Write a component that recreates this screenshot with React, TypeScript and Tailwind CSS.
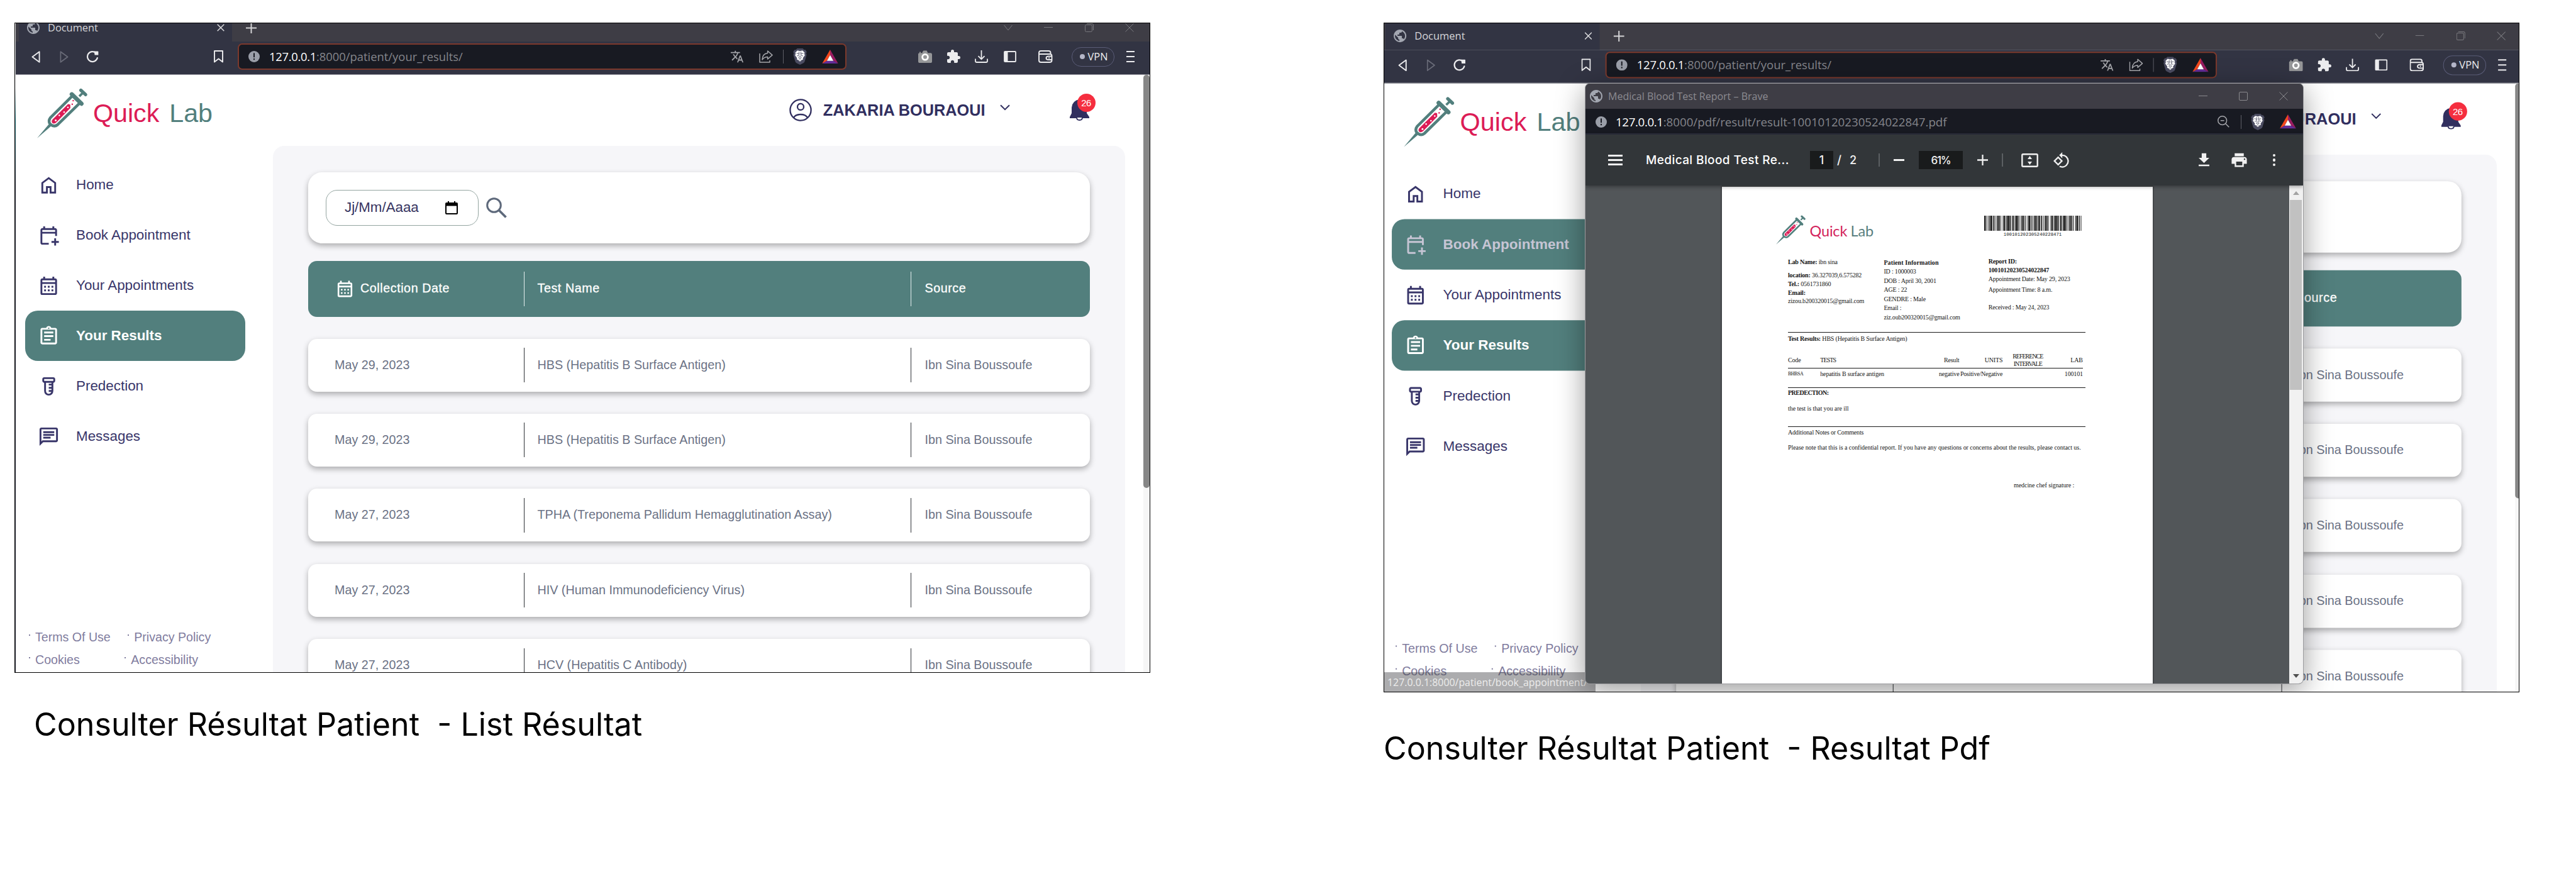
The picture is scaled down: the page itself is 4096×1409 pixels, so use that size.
import type { ReactNode } from "react";
import {
  MdExtension,
  MdFileDownload,
  MdOutlineAssignment,
  MdOutlineCalendarMonth,
  MdOutlineChat,
  MdPrint,
  MdPublic,
  MdRotate90DegreesCcw,
  MdTranslate,
} from "react-icons/md";

/* ---------- drawings ---------- */

function Syringe({ className }: { className: string }) {
  return (
    <svg viewBox="58 50 322 322" className={className} fill="none">
      <path d="M58 371 134 280 148 294Z" fill="#527f7d" />
      <path
        d="M281 103 144 239Q126 262 142 281Q166 303 189 285L330 147"
        stroke="#527f7d"
        strokeWidth="18"
      />
      <path d="M280 90 342 150" stroke="#527f7d" strokeWidth="27" strokeLinecap="round" />
      <path d="M328 103 352 80" stroke="#527f7d" strokeWidth="15" />
      <path d="M338 64 368 92" stroke="#527f7d" strokeWidth="21" strokeLinecap="round" />
      <path
        d="M157 251 256 153 270 156 271 178 182 269Q166 284 154 272Q148 261 157 251Z"
        fill="#dc1c56"
      />
      <g fill="#fff">
        <circle cx="177" cy="257" r="6" />
        <circle cx="200" cy="225" r="5" />
        <circle cx="231" cy="204" r="5" />
        <circle cx="255" cy="174" r="5" />
      </g>
      <circle cx="289" cy="131" r="5" fill="#dc1c56" />
      <circle cx="283" cy="154" r="5" fill="#dc1c56" />
    </svg>
  );
}

function Globe() {
  return <MdPublic className="-m-[2px] size-[24px] shrink-0 text-[#a3a7b1]" />;
}

function InfoDot() {
  return (
    <svg viewBox="0 0 18 18" className="size-[18px] shrink-0">
      <circle cx="9" cy="9" r="9" fill="#9a9ea8" />
      <rect x="8" y="3.4" width="2" height="6.8" fill="#181a22" />
      <rect x="8" y="12" width="2" height="2.2" fill="#181a22" />
    </svg>
  );
}

function BraveShield() {
  return (
    <svg viewBox="0 0 88 104" className="h-[26px] w-[22px] shrink-0">
      <path
        d="M26 0h36l8 9h8l9 13-4 9 3 10-12 42q-2 6-8 10L44 104 22 93q-6-4-8-10L2 41l3-10-4-9L10 9h8Z"
        fill="#4b4c61"
      />
      <path
        d="M28 13 44 17 60 13 74 27 71 33 75 44 62 62 64 70 54 74 44 82 34 74 24 70 26 62 13 44 17 33 14 27Z"
        fill="#fff"
      />
      <path
        d="M22 31 38 34M66 31 50 34M37 21 39 32 36 44 41 54 35 60 44 66 53 60 47 54 52 44 49 32 51 21M24 48 33 46M64 48 55 46"
        fill="none"
        stroke="#4b4c61"
        strokeWidth="3.6"
      />
      <path d="M44 71 54 77 44 84 34 77Z" fill="#fff" stroke="#4b4c61" strokeWidth="2" />
    </svg>
  );
}

function BatTriangle() {
  return (
    <svg viewBox="0 0 104 90" className="h-[22.3px] w-[26px] shrink-0">
      <path d="M52 0V34L31 72 0 90Z" fill="#f4481e" />
      <path d="M52 0 104 90 73 72 52 34Z" fill="#991c62" />
      <path d="M0 90 31 72H73L104 90Z" fill="#632d98" />
      <path d="M52 34 73 72H31Z" fill="#fff" />
    </svg>
  );
}

function Minimize() {
  return (
    <svg viewBox="0 0 14 14" className="size-[14px]" stroke="currentColor" fill="none">
      <path d="M0 6.5H14" />
    </svg>
  );
}

function CloseX({ className = "size-[14px]" }: { className?: string }) {
  return (
    <svg viewBox="0 0 14 14" className={className} stroke="currentColor" fill="none">
      <path d="M.5.5 13.5 13.5M13.5.5.5 13.5" />
    </svg>
  );
}

/* ---------- browser chrome ---------- */

function TabStrip() {
  return (
    <div className="flex h-[42.5px] shrink-0 items-stretch bg-[#3e3d45]">
      <div className="ml-[5px] flex w-[339px] shrink-0 items-center bg-[#323443] pl-[13px] pr-[12px]">
        <Globe />
        <span className="ml-[13px] font-['Open_Sans'] text-[16.4px] leading-5 text-[#d6d6da]">
          Document
        </span>
        <span className="ml-auto text-[#dcdcdf]">
          <svg viewBox="0 0 12 12" className="size-[12px]" stroke="currentColor" strokeWidth="1.5">
            <path d="M.7.7 11.3 11.3M11.3.7.7 11.3" />
          </svg>
        </span>
      </div>
      <div className="flex flex-1 items-center pl-[22px] pr-[25px]">
        <svg viewBox="0 0 17 17" className="size-[17px]" stroke="#d4d4d6" strokeWidth="2">
          <path d="M8.5 0V17M0 8.5H17" />
        </svg>
        <div className="ml-auto flex items-center gap-[50.5px] text-[#77777c]">
          <svg viewBox="0 0 14 14" className="size-[14px]" stroke="currentColor" fill="none">
            <path d="M.5 3 7 11 13.5 3" />
          </svg>
          <Minimize />
          <svg viewBox="0 0 14 14" className="size-[14px]" stroke="currentColor" fill="none">
            <rect x=".5" y="2.5" width="11" height="11" rx="2" />
            <path d="M3 .5H11Q13.5.5 13.5 3V11" />
          </svg>
          <CloseX />
        </div>
      </div>
    </div>
  );
}

function Toolbar() {
  return (
    <div className="flex h-[53px] shrink-0 items-center border-b border-[#85858f] bg-[#323443] pb-[3px] text-[#ececee]">
      <svg viewBox="0 0 14 19" className="ml-[25px] h-[19px] w-[14px] shrink-0" fill="none">
        <path d="M12.6 1.2V17.8L1.4 9.5Z" stroke="#ececee" strokeWidth="1.9" strokeLinejoin="round" />
      </svg>
      <svg viewBox="0 0 14 19" className="ml-[31px] h-[19px] w-[14px] shrink-0" fill="none">
        <path d="M1.4 1.2V17.8L12.6 9.5Z" stroke="#696b78" strokeWidth="1.7" strokeLinejoin="round" />
      </svg>
      <svg viewBox="0 0 20 20" className="ml-[28px] size-[20px] shrink-0" fill="none">
        <path
          d="M15.5 4.2A8 8 0 1 0 17.8 12"
          stroke="#ececee"
          strokeWidth="2.2"
          strokeLinecap="round"
        />
        <path d="M12.6 1.6H18.6Q19.4 1.6 19.4 2.6V7.6H13.6Z" fill="#ececee" />
      </svg>
      <svg viewBox="0 0 15 20" className="ml-[183px] h-[20px] w-[15px] shrink-0" fill="none">
        <path d="M1 1H14V18.6L7.5 13.4 1 18.6Z" stroke="#ececee" strokeWidth="1.9" strokeLinejoin="round" />
      </svg>

      <div className="ml-[23px] flex h-[42px] w-[968px] shrink-0 items-center rounded-[7px] border-2 border-[#7c392c] bg-[#181a22] pl-[15px] pr-[11px]">
        <InfoDot />
        <span className="ml-[15px] whitespace-nowrap font-['Open_Sans'] text-[18.4px] leading-6 text-[#84858b]">
          <span className="tracking-[-0.3px] text-white">127.0.0.1</span>
          :8000/patient/your_results/
        </span>
        <div className="ml-auto flex items-center">
          <MdTranslate className="-m-px size-[22px] text-[#a5a6ab]" />
          <svg viewBox="0 0 22 20" className="ml-[25px] h-[20px] w-[22px]" fill="none">
            <path
              d="M1 5V19H17V16M13.6 1 21 7.6 13.6 14V10.6Q8 10.6 5 15Q5.4 5.4 13.6 4.6Z"
              stroke="#a5a6ab"
              strokeWidth="1.5"
              strokeLinejoin="round"
            />
          </svg>
          <span className="ml-[16px] mr-[15px] h-[22px] w-[1.5px] bg-[#5d5e66]" />
          <BraveShield />
          <span className="w-[24px]" />
          <BatTriangle />
        </div>
      </div>

      <svg viewBox="0 0 22 20" className="ml-[114px] h-[20px] w-[22px] shrink-0">
        <path
          d="M7 2.2 8.4.4H13.6L15.4 4.2H19.6Q22 4.2 22 6.6V17.4Q22 20 19.4 20H2.6Q0 20 0 17.4V6Q0 4.2 2 4.2L2 2.6H4V4.2L6.4 4.2Z"
          fill="#969799"
        />
        <circle cx="11" cy="10.8" r="4.4" fill="#969799" stroke="#fff" strokeWidth="2.8" />
      </svg>
      <MdExtension className="-mr-[2px] ml-[22px] size-[24px] shrink-0" />
      <svg viewBox="0 0 21 20" className="ml-[24px] h-[20px] w-[21px] shrink-0" fill="none">
        <path
          d="M10.5 0V14M5.5 9.2 10.5 14.2 15.5 9.2M1 13.5V17Q1 19 3 19H18Q20 19 20 17V13.5"
          stroke="#ececee"
          strokeWidth="1.8"
        />
      </svg>
      <svg viewBox="0 0 20 18" className="ml-[25px] h-[18px] w-[20px] shrink-0" fill="none">
        <rect x="1" y="1" width="18" height="16" rx="1" stroke="#ececee" strokeWidth="1.8" />
        <rect x="1" y="1" width="5.5" height="16" fill="#ececee" />
      </svg>
      <svg viewBox="0 0 23 20" className="ml-[35px] h-[20px] w-[23px] shrink-0" fill="none">
        <path
          d="M19.5 6V4Q19.5 1 16.5 1H4Q1 1 1 4V16Q1 19 4 19H18Q21.5 19 21.5 16V9Q21.5 6 18.5 6H1M21.5 9.5H16Q12.5 9.5 12.5 12.2 12.5 15 16 15H21.5M16.2 12.2H18"
          stroke="#ececee"
          strokeWidth="1.9"
        />
      </svg>
      <div className="ml-[30px] flex h-[31px] w-[68px] shrink-0 items-center rounded-[15px] border-[1.5px] border-[#5a5c77] pl-[12px]">
        <span className="size-[8px] rounded-full bg-[#b4b6c8]" />
        <span className="ml-[4.5px] font-['Open_Sans'] text-[16.4px] leading-5">VPN</span>
      </div>
      <div className="ml-[19px] flex w-[13px] shrink-0 flex-col gap-[6px]">
        <span className="h-[2px] bg-[#ececee]" />
        <span className="h-[2px] bg-[#ececee]" />
        <span className="h-[2px] bg-[#ececee]" />
      </div>
    </div>
  );
}

/* ---------- lab site ---------- */

const navIcon = "size-[35px] shrink-0";

const nav: { label: string; icon: ReactNode }[] = [
  {
    label: "Home",
    icon: (
      <svg viewBox="0 0 24 24" className={navIcon} fill="currentColor">
        <path d="M6 19h3v-6h6v6h3v-9l-6-4.5L6 10v9Zm-2 2V9l8-6 8 6v12h-7v-6h-2v6H4Z" />
      </svg>
    ),
  },
  {
    label: "Book Appointment",
    icon: (
      <svg viewBox="0 0 24 24" className={navIcon} fill="currentColor">
        <path d="M5 22q-.83 0-1.4-.6Q3 20.85 3 20V6q0-.83.6-1.4Q4.2 4 5 4h1V2h2v2h8V2h2v2h1q.83 0 1.4.6Q21 5.2 21 6v6.5h-2V10H5v10h7v2H5ZM5 8h14V6H5v2Zm13 15v-3h-3v-2h3v-3h2v3h3v2h-3v3h-2Z" />
      </svg>
    ),
  },
  { label: "Your Appointments", icon: <MdOutlineCalendarMonth className={navIcon} /> },
  { label: "Your Results", icon: <MdOutlineAssignment className={navIcon} /> },
  {
    label: "Predection",
    icon: (
      <svg viewBox="0 0 24 24" className={navIcon} fill="currentColor">
        <path d="M12 22q-2.08 0-3.54-1.46T7 17V8q-.83 0-1.41-.59T5 6V4q0-.83.59-1.41T7 2h10q.83 0 1.41.59T19 4v2q0 .83-.59 1.41T17 8v9q0 2.08-1.46 3.54T12 22ZM7 6h10V4H7v2Zm5 14q1.03 0 1.81-.6.79-.6 1.06-1.4H12v-2h3v-1.5h-3v-2h3V11h-3V9h3V8H9v9q0 1.25.88 2.13T12 20Z" />
      </svg>
    ),
  },
  { label: "Messages", icon: <MdOutlineChat className={navIcon} /> },
];

const results = [
  ["May 29, 2023", "HBS (Hepatitis B Surface Antigen)"],
  ["May 29, 2023", "HBS (Hepatitis B Surface Antigen)"],
  ["May 27, 2023", "TPHA (Treponema Pallidum Hemagglutination Assay)"],
  ["May 27, 2023", "HIV (Human Immunodeficiency Virus)"],
  ["May 27, 2023", "HCV (Hepatitis C Antibody)"],
];

function SiteHeader() {
  return (
    <header className="flex h-[113px] shrink-0 items-center pl-[34px] pr-[86px]">
      <div className="mt-[9px] flex items-center">
        <Syringe className="size-[80px]" />
        <div className="ml-[9px] whitespace-nowrap text-[41.2px] leading-[50px]">
          <span className="text-[#dc1c56]">Quick</span>
          <span className="ml-[16px] text-[#527f7d]">Lab</span>
        </div>
      </div>
      <div className="ml-auto flex items-center text-[#312f5f]">
        <svg viewBox="0 0 36 36" className="size-[36px]" fill="none" stroke="currentColor" strokeWidth="2.3">
          <circle cx="18" cy="18" r="16.6" />
          <circle cx="18" cy="12.9" r="5" />
          <path d="M7 30Q10 25 18 25T29 30" />
        </svg>
        <span className="ml-[18px] whitespace-nowrap text-[25.3px] font-bold leading-8">
          ZAKARIA BOURAOUI
        </span>
        <svg viewBox="0 0 16 10" className="mb-[8px] ml-[23px] h-[10px] w-[16px]" fill="none" stroke="currentColor" strokeWidth="2">
          <path d="M1 1.2 8 8.2 15 1.2" />
        </svg>
        <div className="relative ml-[95px] h-[34px] w-[31px]">
          <svg viewBox="0 0 31 34" className="h-[34px] w-[31px]">
            <path
              d="M15.5 0Q27 1 27 14V22L31 28V30H0V28L3 22V13Q4 2 15.5 0Z"
              fill="#312f5f"
            />
            <path d="M11 29Q11 33 15.5 33T20 29" fill="#fff" stroke="#312f5f" strokeWidth="1.8" />
          </svg>
          <span className="absolute -top-[9px] left-[12px] flex size-[29px] items-center justify-center rounded-full bg-[#f52e3f] text-[15px] leading-none tracking-[-0.6px] text-white">
            26
          </span>
        </div>
      </div>
    </header>
  );
}

function Dot({ className = "" }: { className?: string }) {
  return <span className={`mb-[5px] mr-[8px] size-[2.5px] bg-[#7f7c9e] ${className}`} />;
}

function Sidebar({ hovered }: { hovered?: string }) {
  return (
    <aside className="flex w-[409px] shrink-0 flex-col pt-[22.5px] text-[#39366a]">
      {nav.map(({ label, icon }) => {
        const active = label === "Your Results";
        const hover = label === hovered;
        const tone = active
          ? "bg-[#527f7d] font-bold text-white"
          : hover
            ? "bg-[#527f7d] font-bold text-[#c6c5d4]"
            : "";
        return (
          <div
            key={label}
            className={`ml-[15px] flex h-[80px] w-[350px] shrink-0 items-center rounded-[20px] pl-[19.5px] text-[22.4px] leading-8 ${tone}`}
          >
            {icon}
            <span className="ml-[26.5px] whitespace-nowrap">{label}</span>
          </div>
        );
      })}
      <div className="mt-[260.5px] pl-[20.5px] text-[19.6px] leading-[36px] text-[#7f7c9e]">
        <div className="flex items-center">
          <Dot />
          Terms Of Use
          <Dot className="ml-[27px]" />
          Privacy Policy
        </div>
        <div className="flex items-center">
          <Dot />
          Cookies
          <Dot className="ml-[71px]" />
          Accessibility
        </div>
      </div>
    </aside>
  );
}

function ResultsPanel() {
  return (
    <main className="w-[1355px] shrink-0 rounded-t-[18px] bg-[#f6f6f9] px-[56px] pt-[42px]">
      <div className="flex h-[113px] items-center rounded-[22px] bg-white pl-[28px] shadow-[0_4px_10px_rgba(0,0,0,0.3)]">
        <div className="flex h-[57px] w-[243px] items-center justify-between rounded-[18px] border border-[#94a5a1] pl-[29px] pr-[32px] text-[22.3px] leading-8 text-[#36345f]">
          Jj/Mm/Aaaa
          <svg viewBox="0 0 20 21" className="h-[21px] w-[20px]">
            <path d="M2 2H4V0H6V2H14V0H16V2H18Q20 2 20 4V19Q20 21 18 21H2Q0 21 0 19V4Q0 2 2 2ZM2 7.5V19H18V7.5Z" fillRule="evenodd" />
          </svg>
        </div>
        <svg viewBox="0 0 33 33" className="ml-[12px] size-[33px]" fill="none" stroke="#5e697b">
          <circle cx="12.5" cy="12.5" r="10.8" strokeWidth="3" />
          <path d="M20 20 31.5 31.5" strokeWidth="3.8" />
        </svg>
      </div>

      <div className="mt-[28px] flex h-[89px] items-center rounded-[14px] bg-[#527f7d] text-[19.7px] tracking-[0.57px] text-white [-webkit-text-stroke:0.3px_white]">
        <div className="flex w-[343px] items-center pl-[43px]">
          <MdOutlineCalendarMonth className="size-[31px] [-webkit-text-stroke:0]" />
          <span className="ml-[9px]">Collection Date</span>
        </div>
        <div className="flex h-[55px] w-[615px] items-center border-l border-[#e4eeee] pl-[20.5px]">
          Test Name
        </div>
        <div className="flex h-[55px] items-center border-l border-[#e4eeee] pl-[21.5px]">
          Source
        </div>
      </div>

      <div className="mt-[35px] flex flex-col gap-[35.4px]">
        {results.map(([date, test], i) => (
          <div
            key={i}
            className="flex h-[84px] items-center rounded-[14px] bg-white text-[19.73px] text-[#6b7285] shadow-[0_4px_10px_rgba(0,0,0,0.3)]"
          >
            <div className="w-[343px] pl-[42px]">{date}</div>
            <div className="flex h-[55px] w-[615px] items-center border-l border-[#2f3236] pl-[20.5px]">
              {test}
            </div>
            <div className="flex h-[55px] items-center border-l border-[#2f3236] pl-[21.5px]">
              Ibn Sina Boussoufe
            </div>
          </div>
        ))}
      </div>
    </main>
  );
}

function Screen({ hovered }: { hovered?: string }) {
  return (
    <div className="flex h-[1062px] w-[1803px] shrink-0 flex-col overflow-hidden bg-white font-['Liberation_Sans']">
      <TabStrip />
      <Toolbar />
      <div className="flex min-h-0 flex-1 overflow-hidden">
        <div className="flex flex-1 flex-col">
          <SiteHeader />
          <div className="flex min-h-0 flex-1">
            <Sidebar hovered={hovered} />
            <ResultsPanel />
          </div>
        </div>
        <div className="w-[10.5px] bg-[#f6f6f6]">
          <div className="h-[657px] rounded-[5px] bg-[#868686]" />
        </div>
      </div>
    </div>
  );
}

/* ---------- pdf pop-up ---------- */

const pattern = [
  3, 1, 1, 2, 1, 3, 2, 1, 1, 1, 4, 2, 1, 1, 2, 3, 1, 2, 1, 1, 3, 1, 2, 2, 1, 4, 1, 1, 3, 1, 1, 2, 2, 1, 4, 1, 1, 1,
  2, 3, 3, 1, 1, 2, 1, 1, 4, 1, 2, 2, 1, 3, 1, 1, 2, 1, 3, 2, 1, 1, 1, 4, 2, 1, 3, 1, 1, 2, 2, 3, 1, 1, 3, 1, 2, 1,
  1, 2,
];
const bars = [...pattern, ...pattern.slice(10, 71)];

function Barcode() {
  const total = bars.reduce((a, b) => a + b, 0);
  let x = 0;
  return (
    <svg viewBox={`0 0 ${total} 24`} preserveAspectRatio="none" className="h-[24px] w-[155px]">
      {bars.map((w, i) => {
        const bar = i % 2 === 0 ? <rect key={i} x={x} y="0" width={w + 0.25} height="24" fill="#1c1c1c" /> : null;
        x += w;
        return bar;
      })}
    </svg>
  );
}

function Rule({ className = "" }: { className?: string }) {
  return <div className={`border-t border-[#1a1a1a] ${className}`} />;
}

const pdfGrid = "grid grid-cols-[51.3px_143px_78.1px_68.9px_80px_47.5px] items-center";

function PdfPage() {
  return (
    <div className="ml-[216.5px] mt-[2px] h-[800px] w-[685.5px] shrink-0 bg-white font-['Liberation_Serif'] text-[10px] leading-[14px] tracking-[-0.18px] text-[#151515] shadow-[0_0_2px_1px_rgba(0,0,0,0.35)]">
      <div className="flex h-[112px] pl-[86.5px] pt-[45px]">
        <Syringe className="size-[47px]" />
        <div className="ml-[6.5px] flex pt-[11px] font-['Lato'] text-[23.5px] leading-[28px]">
          <span className="w-[65px] text-[#d3235b]">Quick</span>
          <span className="text-[#5a7f80]">Lab</span>
        </div>
        <div className="ml-auto mr-[113.5px] flex flex-col items-center pt-[1px]">
          <Barcode />
          <span className="mt-[2px] font-['Liberation_Mono'] text-[7.35px] leading-[9px] tracking-normal">
            100101202305240228471
          </span>
        </div>
      </div>

      <div className="ml-[105.5px] w-[472.5px] whitespace-nowrap">
        <div className="grid h-[119px] grid-cols-[152.4px_166.3px_1fr] content-start">
          <div className="pt-px">
            <div><b>Lab Name:</b> ibn sina</div>
            <div className="mt-[7px]"><b>location:</b> 36.327039,6.575282</div>
            <div><b>Tel.:</b> 0561731860</div>
            <div className="leading-[13px]"><b>Email:</b></div>
            <div>zizou.b200320015@gmail.com</div>
          </div>
          <div className="pt-[1.5px] leading-[14.5px]">
            <div className="font-bold tracking-[0.1px]">Patient Information</div>
            <div>ID : 1000003</div>
            <div>DOB : April 30, 2001</div>
            <div>AGE : 22</div>
            <div>GENDRE : Male</div>
            <div>Email :</div>
            <div>ziz.oub200320015@gmail.com</div>
          </div>
          <div>
            <div className="font-bold">Report ID:</div>
            <div className="font-bold leading-[13px]">10010120230524022847</div>
            <div className="mt-[0.6px]">Appointment Date: May 29, 2023</div>
            <div className="mt-[3px]">Appointment Time: 8 a.m.</div>
            <div className="mt-[14px]">Received : May 24, 2023</div>
          </div>
        </div>

        <Rule />
        <div className="mt-[2.5px]"><b>Test Results:</b> HBS (Hepatitis B Surface Antigen)</div>
        <div className={`mt-[15px] h-[24px] ${pdfGrid}`}>
          <span>Code</span>
          <span className="tracking-[-0.9px]">TESTS</span>
          <span className="text-right">Result</span>
          <span className="text-right">UNITS</span>
          <span className="text-center leading-[11.3px] tracking-[-1px]">
            REFERENCE
            <br />
            INTERVALE
          </span>
          <span className="text-right">LAB</span>
        </div>
        <Rule className="mt-[0.5px] w-[469.3px]" />
        <div className={`mt-[1.5px] ${pdfGrid}`}>
          <span className="text-[8px] tracking-[-0.5px]">BHBSA</span>
          <span>hepatitis B surface antigen</span>
          <span className="text-right">negative</span>
          <span className="text-right tracking-[-0.22px]">Positive/Negative</span>
          <span />
          <span className="text-right">100101</span>
        </div>
        <Rule className="mt-[14px]" />
        <div className="mt-[1.5px] font-bold tracking-[-0.5px]">PREDECTION:</div>
        <div className="mt-[10.5px] tracking-[-0.07px]">the test is that you are ill</div>
        <Rule className="mt-[21.5px]" />
        <div className="mt-[1.5px]">Additional Notes or Comments</div>
        <div className="mt-[10.5px] tracking-[-0.055px]">
          Please note that this is a confidential report. If you have any questions or concerns about the results, please
          contact us.
        </div>
        <div className="mt-[46px] pl-[359px] tracking-[-0.07px]">medcine chef signature :</div>
      </div>
    </div>
  );
}

function PdfWindow() {
  return (
    <div className="absolute left-[319px] top-[95px] flex h-[956px] w-[1143px] flex-col overflow-hidden rounded-[8px] border border-[#9c9c9f] bg-[#525659] shadow-[0_10px_46px_rgba(0,0,0,0.4)]">
      <div className="flex h-[40px] shrink-0 items-center bg-[#3e3d45] pl-[7px] pr-[24px]">
        <Globe />
        <span className="ml-[9px] font-['Open_Sans'] text-[16px] leading-5 text-[#8c8b91]">
          Medical Blood Test Report – Brave
        </span>
        <div className="ml-auto flex items-center gap-[50px] text-[#8a8a8e]">
          <Minimize />
          <svg viewBox="0 0 14 14" className="size-[14px]" stroke="currentColor" fill="none">
            <rect x=".5" y=".5" width="13" height="13" rx="1.5" />
          </svg>
          <CloseX />
        </div>
      </div>

      <div className="flex h-[41px] shrink-0 items-center border-b-2 border-[#2b2d3b] bg-[#181a22] pl-[15.5px] pr-[11px] pt-[2px]">
        <InfoDot />
        <span className="ml-[14.5px] font-['Open_Sans'] text-[18.7px] leading-6 text-[#84858b]">
          <span className="tracking-[-0.35px] text-white">127.0.0.1</span>
          :8000/pdf/result/result-10010120230524022847.pdf
        </span>
        <div className="ml-auto flex items-center">
          <svg viewBox="0 0 19 19" className="size-[19px]" fill="none" stroke="#a5a6ab" strokeWidth="1.5">
            <circle cx="7.7" cy="7.7" r="6.9" />
            <path d="M12.8 12.8 18.3 18.3M4.8 7.7H10.6" />
          </svg>
          <span className="ml-[18px] mr-[15px] h-[22px] w-[1.5px] bg-[#5d5e66]" />
          <BraveShield />
          <span className="w-[24px]" />
          <BatTriangle />
        </div>
      </div>

      <div className="z-10 flex h-[81px] shrink-0 items-center bg-[#323639] pl-[36px] pr-[44px] font-['Inter'] text-[18px] font-medium leading-6 text-[#f1f1f1] shadow-[0_2px_6px_rgba(0,0,0,0.35)]">
        <div className="flex w-[23px] flex-col gap-[4px]">
          <span className="h-[3px] bg-[#f1f1f1]" />
          <span className="h-[3px] bg-[#f1f1f1]" />
          <span className="h-[3px] bg-[#f1f1f1]" />
        </div>
        <span className="ml-[37px] w-[261px] whitespace-nowrap text-[19px] tracking-[0.4px] text-white">
          Medical Blood Test Re...
        </span>
        <span className="flex h-[28.5px] w-[37px] items-center justify-center bg-[#191b1c]">1</span>
        <span className="ml-[6px] w-[7px] text-[19px]">/</span>
        <span className="ml-[13px] w-[11px]">2</span>
        <span className="ml-[35px] h-[21px] w-[1.5px] bg-[#5b5f62]" />
        <span className="ml-[22.5px] h-[2.6px] w-[17px] bg-[#f1f1f1]" />
        <span className="ml-[23px] flex h-[28.5px] w-[70px] items-center justify-center bg-[#191b1c] text-[17px] tracking-[-1.2px]">
          61%
        </span>
        <svg viewBox="0 0 17 17" className="ml-[22.5px] size-[17px]" stroke="#f1f1f1" strokeWidth="2.3">
          <path d="M8.5 0V17M0 8.5H17" />
        </svg>
        <span className="ml-[22.5px] h-[21px] w-[1.5px] bg-[#5b5f62]" />
        <svg viewBox="0 0 27 22" className="ml-[29px] h-[22px] w-[27px]" fill="none">
          <rect x="1.3" y="1.3" width="24.4" height="19.4" rx="1.5" stroke="#f1f1f1" strokeWidth="2.4" />
          <path d="M13.5 4 17 9H10ZM13.5 18 17 13H10Z" fill="#f1f1f1" />
        </svg>
        <MdRotate90DegreesCcw className="ml-[23px] size-[28px]" />
        <MdFileDownload className="-mr-[5px] ml-auto size-[29px]" />
        <MdPrint className="ml-[32px] size-[29px]" />
        <div className="ml-[39px] flex flex-col gap-[3px]">
          <span className="size-[4.5px] rounded-full bg-[#f1f1f1]" />
          <span className="size-[4.5px] rounded-full bg-[#f1f1f1]" />
          <span className="size-[4.5px] rounded-full bg-[#f1f1f1]" />
        </div>
      </div>

      <div className="flex flex-1 justify-between overflow-hidden">
        <PdfPage />
        <div className="flex w-[22.5px] flex-col items-center justify-between bg-[#f1f1f1] py-[9px]">
          <svg viewBox="0 0 10 6" className="h-[6px] w-[10px] shrink-0">
            <path d="M0 6 5 0 10 6Z" fill="#a3a3a3" />
          </svg>
          <div className="mb-auto mt-[8px] h-[302px] w-[19px] bg-[#c1c1c1]" />
          <svg viewBox="0 0 10 6" className="h-[6px] w-[10px] shrink-0">
            <path d="M0 0H10L5 6Z" fill="#505050" />
          </svg>
        </div>
      </div>
    </div>
  );
}

/* ---------- board ---------- */

export default function App() {
  return (
    <div className="flex h-[1409px] w-[4096px] items-start overflow-hidden bg-white pl-[23px] pt-[36px] text-black">
      <section className="w-[1806px] shrink-0">
        <div className="flex h-[1034px] overflow-hidden border border-black">
          <div className="w-px shrink-0 bg-linear-to-b from-[#e8e8e8] from-10% via-[#2b7f86] via-15% to-[#2a2c38] to-25%" />
          <div className="-mt-[14px]">
            <Screen />
          </div>
        </div>
        <p className="ml-[31px] mt-[52px] whitespace-pre font-['Inter'] text-[50.2px] leading-[60px]">
          {"Consulter Résultat Patient  - List Résultat"}
        </p>
      </section>

      <section className="ml-[371px] w-[1806px] shrink-0">
        <div className="relative h-[1065px] overflow-hidden border border-black">
          <div className="-ml-[3px] -mt-px w-[1803px] origin-top-left scale-[1.0046]">
            <Screen hovered="Book Appointment" />
          </div>
          <div className="absolute bottom-0 left-0 flex h-[31px] w-[336px] items-center bg-[#3a3a3e]/42 pl-[5px] pt-[1px] font-['Open_Sans'] text-[15.9px] leading-5 text-[#ececec]">
            127.0.0.1:8000/patient/book_appointment/
          </div>
          <PdfWindow />
        </div>
        <p className="mt-[59px] whitespace-pre font-['Inter'] text-[50.2px] leading-[60px]">
          {"Consulter Résultat Patient  - Resultat Pdf"}
        </p>
      </section>
    </div>
  );
}
